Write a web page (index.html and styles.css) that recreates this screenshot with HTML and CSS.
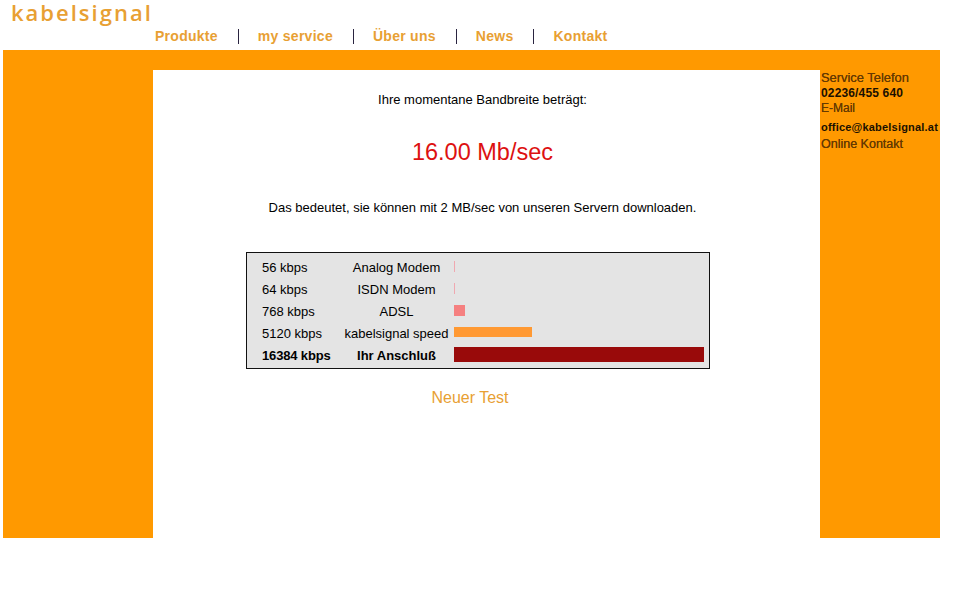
FILE: index.html
```html
<!DOCTYPE html>
<html lang="de">
<head>
    <meta charset="UTF-8">
    <title>kabelsignal Speedtest</title>
    <link rel="stylesheet" href="styles.css">
</head>
<body>

    <div class="logo">kabelsignal</div>

    <!-- Hauptnavigation -->
    <nav class="nav">
        <a href="#">Produkte</a>
        <span class="sep"></span>
        <a href="#">my service</a>
        <span class="sep"></span>
        <a href="#">Über uns</a>
        <span class="sep"></span>
        <a href="#">News</a>
        <span class="sep"></span>
        <a href="#">Kontakt</a>
    </nav>

    <div class="frame">
        <div class="left-col"></div>

        <main class="content">
            <p class="intro">Ihre momentane Bandbreite beträgt:</p>
            <p class="speed">16.00 Mb/sec</p>
            <p class="note">Das bedeutet, sie können mit 2 MB/sec von unseren Servern downloaden.</p>

            <div class="compare">
                <div class="row">
                    <span class="kbps">56 kbps</span>
                    <span class="type">Analog Modem</span>
                    <span class="bar bar-modem"></span>
                </div>
                <div class="row">
                    <span class="kbps">64 kbps</span>
                    <span class="type">ISDN Modem</span>
                    <span class="bar bar-modem"></span>
                </div>
                <div class="row">
                    <span class="kbps">768 kbps</span>
                    <span class="type">ADSL</span>
                    <span class="bar bar-adsl"></span>
                </div>
                <div class="row">
                    <span class="kbps">5120 kbps</span>
                    <span class="type">kabelsignal speed</span>
                    <span class="bar bar-speed"></span>
                </div>
                <div class="row row-own">
                    <span class="kbps">16384 kbps</span>
                    <span class="type">Ihr Anschluß</span>
                    <span class="bar bar-own"></span>
                </div>
            </div>

            <a class="again" href="#">Neuer Test</a>
        </main>

        <aside class="service">
            <div class="tel-label">Service Telefon</div>
            <div class="strong">02236/455 640</div>
            <div>E-Mail</div>
            <div class="strong mail">office@kabelsignal.at</div>
            <div class="online">Online Kontakt</div>
        </aside>
    </div>

</body>
</html>
```

FILE: styles.css
```css
body {
    font-family: "Liberation Sans", Arial, sans-serif;
    background-color: white;
    color: black;
    margin: 0;
    padding: 0 20px 0 3px;
}

a {
    text-decoration: none;
}

.logo {
    height: 25px;
    padding-left: 8px;
    font-family: "Open Sans", sans-serif;
    font-size: 22px;
    font-weight: 600;
    line-height: 24px;
    letter-spacing: 2px;
    color: #e8a033;
}

.nav {
    display: flex;
    align-items: center;
    height: 22px;
    margin-bottom: 3px;
    padding-left: 152px;
    font-size: 14px;
    font-weight: bold;
    letter-spacing: 0.27px;
}

.nav a {
    color: #e8a033;
}

.sep {
    width: 1px;
    height: 15px;
    margin: 0 19px 0 20px;
    background-color: #2a2440;
}

.frame {
    display: flex;
    width: 937px;
    height: 488px;
    background-color: #ff9900;
    padding-top: 20px;
    box-sizing: border-box;
}

.left-col {
    width: 150px;
}

.content {
    width: 667px;
    box-sizing: border-box;
    padding-right: 8px;
    background-color: white;
    display: flex;
    flex-direction: column;
    align-items: center;
    font-size: 13px;
}

.intro {
    margin: 22px 0 0;
    line-height: 16px;
}

.speed {
    margin: 30px 0 0;
    font-size: 23.5px;
    line-height: 28px;
    color: #dd1111;
}

.note {
    margin: 34px 0 0;
    line-height: 16px;
}

.compare {
    width: 464px;
    height: 117px;
    box-sizing: border-box;
    margin: 36px 9px 0 0;
    padding: 3px 0 0 15px;
    background-color: #e4e4e4;
    border: 1px solid #111;
}

.row {
    display: flex;
    align-items: center;
    height: 22px;
}

.row-own {
    font-weight: bold;
}

.row-own .kbps {
    letter-spacing: -0.15px;
}

.kbps {
    width: 77px;
}

.type {
    width: 115px;
    text-align: center;
    white-space: nowrap;
}

.bar {
    display: block;
}

.bar-modem {
    width: 1px;
    height: 11px;
    margin-top: -2px;
    background-color: #f0a8b0;
}

.bar-adsl {
    width: 11px;
    height: 11px;
    margin-top: -2px;
    background-color: #f58080;
}

.bar-speed {
    width: 78px;
    height: 10px;
    margin-top: -2px;
    background-color: #ff9933;
}

.bar-own {
    width: 250px;
    height: 15px;
    margin-top: -2px;
    background-color: #990a0a;
}

.again {
    margin: 19px 25px 0 0;
    font-size: 16px;
    line-height: 19px;
    color: #e8a033;
}

.service {
    width: 120px;
    padding-left: 1px;
    box-sizing: border-box;
    font-size: 12px;
    line-height: 15px;
    color: #663a00;
    text-shadow: 0 0 0.5px #663a00;
    white-space: nowrap;
}

.tel-label {
    font-size: 12.9px;
    line-height: 16px;
}

.strong {
    font-weight: bold;
    letter-spacing: 0.15px;
    color: #1a1000;
    text-shadow: none;
}

.mail {
    font-size: 11px;
    line-height: 21px;
    letter-spacing: 0.2px;
    margin-top: 1px;
}

.online {
    font-size: 12.5px;
    margin-top: -1px;
}
```
